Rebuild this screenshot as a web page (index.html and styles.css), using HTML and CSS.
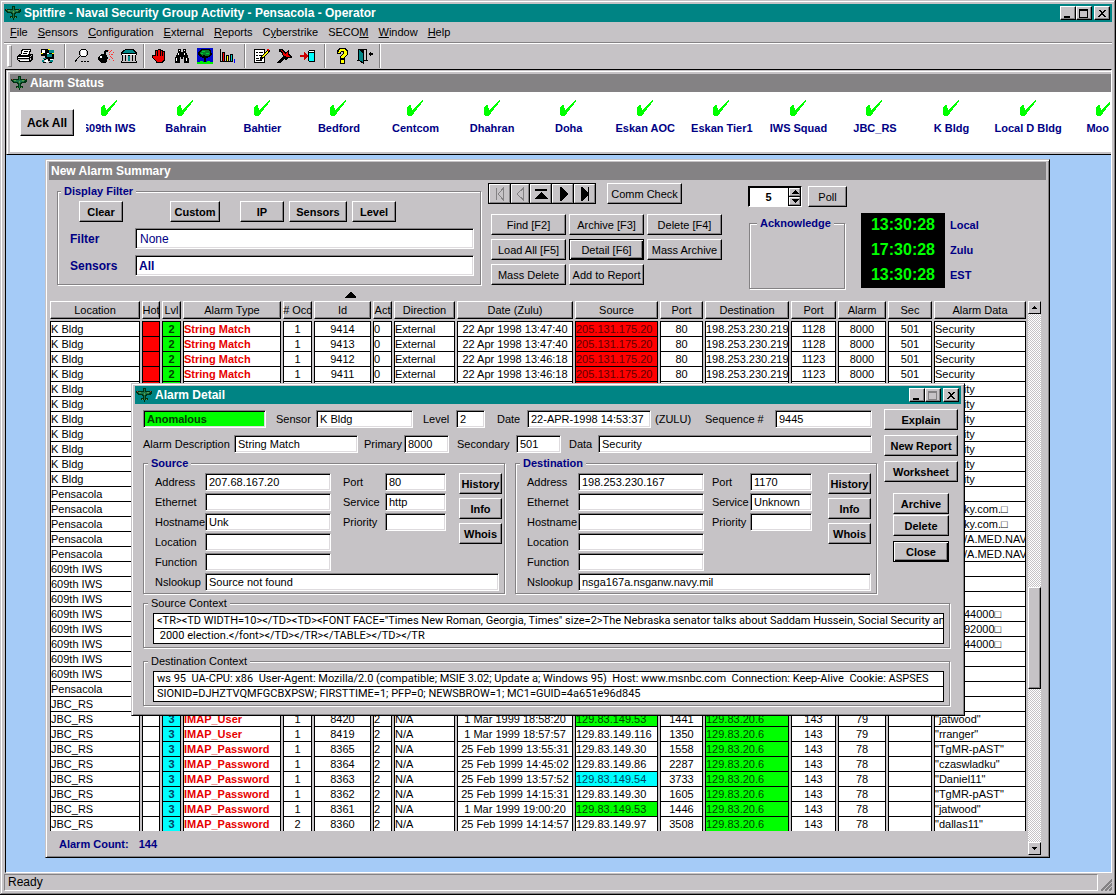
FILE: index.html
```html
<!DOCTYPE html>
<html lang="en">
<head>
<meta charset="utf-8">
<title>Spitfire - Naval Security Group Activity - Pensacola - Operator</title>
<link rel="stylesheet" href="styles.css">
</head>
<body>
<svg class="defs" aria-hidden="true">
  <symbol id="plane" viewBox="0 0 16 14"><path fill="#031" d="M7 0h3v3h6v2l-2 2h-2l-2 1v2h2v2H9v2H8v-2H5v-2h2V8L5 7H3L0 5V3h7z"/><path fill="#18734a" d="M8 1h1v3h5v1l-2 1h-2L9 8v4H8V8L7 6H4L2 5V4h6z"/><path fill="#5a9c4a" d="M3 4h2v1H3zM11 4h2v1h-2zM8 5h1v2H8zM6 11h1v1H6zM10 11h1v1h-1z"/><path fill="#a33" d="M1 3h1v1H1zM14 3h1v1h-1z"/></symbol>
  <symbol id="tick" viewBox="0 0 17 16"><path fill="#0f0" d="M0 7l3-2h1l1 5L15 0h1v1l-2 3-7 9-3 3H1L0 15z"/></symbol>
  <symbol id="min" viewBox="0 0 10 9"><path d="M1 7h6v2H1z"/></symbol>
  <symbol id="max" viewBox="0 0 10 9"><path fill="none" stroke="currentColor" d="M.5 .5h8v8h-8zM0 1.5h9"/></symbol>
  <symbol id="close" viewBox="0 0 10 9"><path d="M1 1h2l2 2 2-2h2L6 4l3 4H7L5 5.500 3 8H1l3-4z"/></symbol>
</svg>

<header class="titlebar">
  <svg class="plane"><use href="#plane"/></svg>
  <h1 class="title">Spitfire - Naval Security Group Activity - Pensacola - Operator</h1>
  <div class="winbtns">
    <button class="winbtn" aria-label="Minimize"><svg><use href="#min"/></svg></button>
    <button class="winbtn" aria-label="Maximize"><svg><use href="#max"/></svg></button>
    <button class="winbtn winbtn-close" aria-label="Close"><svg><use href="#close"/></svg></button>
  </div>
</header>

<nav class="menu">
  <button><u>F</u>ile</button>
  <button><u>S</u>ensors</button>
  <button><u>C</u>onfiguration</button>
  <button><u>E</u>xternal</button>
  <button><u>R</u>eports</button>
  <button>C<u>y</u>berstrike</button>
  <button>SECO<u>M</u></button>
  <button><u>W</u>indow</button>
  <button><u>H</u>elp</button>
</nav>

<div class="toolbar" role="toolbar">
  <span class="grip"></span>
  <div class="tools">
    <button aria-label="Print"><svg viewBox="0 0 16 16"><path d="M5 1h9v2l-1 3h2l1 1v4l-3 3H2l-2-2V8l2-2h2V3z"/><path fill="#fff" d="M6 2h7l-2 5H4zM1 9h11v1H1zM2 12h10v1H3z"/><path fill="#c6c3c6" d="M1 11h11v1H1zM13 8h1v1h-1zM14 7h1v1h-1zM13 10h1v2h-1z"/><path d="M7 3h4v1H7zM6 5h4v1H6z"/></svg></button>
    <button aria-label="Network"><svg viewBox="0 0 16 16"><path d="M1 1h8v3h5v7H5V8H1z"/><path fill="#fff" d="M2 2h3v3H2zM7 5h2v1H7zM5 12h3v2H5zM10 11h3v1h-3z"/><path fill="#088" d="M9 2h5v3H9zM7 6h5v3H7zM3 10h3v1H3zM2 12h2v2H2zM10 12h3v2h-3z"/><path fill="#ff0" d="M1 5h2v1H1zM12 5h2v1h-2zM8 1h2v1H8z"/><path d="M4 11h2v1H4zM3 14h3v1H3zM8 11h2v2H8zM9 14h3v1H9z"/></svg></button>
  </div>
  <div class="tools">
    <button aria-label="Search"><svg viewBox="0 0 16 16"><path fill="#fff" d="M6 2h5v6H6z"/><path d="M6 1h5v1H6zM11 2h1v1h-1zM12 3h1v4h-1zM11 7h1v1h-1zM6 8h5v1H6zM5 7h1v1H5zM4 3h1v4H4zM5 2h1v1H5zM4 8h1v1H4zM3 9h1v1H3zM2 10h1v1H2zM1 11h1v2H1zM0 12h1v2H0zM6 13h2v1H6zM9 13h2v1H9zM12 13h2v1h-2z"/></svg></button>
    <button aria-label="Bomb"><svg viewBox="0 0 16 16"><path d="M3 6h4l2 2 1 2-1 3-2 2H3l-2-2-1-3 1-2zM6 5l1-3h2l1 1v1H8L8 8z"/><path fill="#fff" d="M2 8h2v2H2z"/><path fill="#f33" d="M11 4h1v1h-1zM12 3h1v1h-1zM13 2h1v1h-1zM11 6h1v1h-1zM13 6h2v1h-2zM12 8h1v1h-1zM13 9h1v1h-1zM14 10h1v1h-1zM15 4h1v1h-1zM10 2h1v1h-1zM11 11h1v1h-1zM15 12h1v1h-1z"/></svg></button>
    <button aria-label="Headquarters"><svg viewBox="0 0 16 16"><path d="M5 1h6l3 1 2 3v2h-1v6h1v2H0v-2h1V7H0V5l2-3z"/><path fill="#088" d="M5 2h6l2 1 1 2H2l1-2z"/><path fill="#c6c3c6" d="M2 7h2v6H2zM5 7h2v6H5zM9 7h2v6H9zM12 7h2v6h-2zM1 13h14v1H1z"/><path fill="#fff" d="M1 6h14v1H1z"/><path fill="#088" d="M7 8h2v5H7z"/></svg></button>
  </div>
  <div class="tools">
    <button aria-label="Stop"><svg viewBox="0 0 16 16"><path d="M5 2h2V1h3v1h2v1h2v9l-2 2v1H5v-1L1 9V7h3V2z"/><path fill="#e00" d="M5 3h1v5H5zM7 2h2v6H7zM10 3h1v5h-1zM12 4h1v5h-1zM5 8h8v3l-2 3H6L2 9V8h3z"/></svg></button>
    <button aria-label="Find"><svg viewBox="0 0 16 16"><path d="M4 1h3v3h2V1h3v3l2 4 1 3v4h-5V9H9v2H7V9H6v6H1v-4l1-3 2-4z"/><path fill="#fff" d="M4 5h1v2H4zM2 10h1v3H2zM10 5h1v2h-1zM12 10h1v3h-1zM5 2h1v1H5zM10 2h1v1h-1z"/></svg></button>
    <button aria-label="Tree view"><svg viewBox="0 0 16 16"><path fill="#0008ce" d="M0 0h16v16H0z"/><path d="M4 1h8l2 2 1 3-2 3-4 1v4h2v1H5v-1h2v-4L3 9 1 6l1-3z"/><path fill="#087b29" d="M5 2h6l2 2v2l-2 2H9L7 7 5 8 3 6V4z"/><path fill="#0c3" d="M5 3h3v1H5zM9 5h3v1H9zM4 5h2v1H4z"/><path fill="#0e0" d="M0 14h3v-1h3v1h4v-1h3v1h3v2H0z"/></svg></button>
    <button aria-label="Chart"><svg viewBox="0 0 16 16"><path d="M0 1h1v12h12v1H0zM2 4h3v9H2zM6 7h3v6H6zM10 6h3v7h-3z"/><path fill="#f00" d="M3 5h1v8H3z"/><path fill="#ff0" d="M7 8h1v5H7z"/><path fill="#0cc" d="M11 7h1v6h-1z"/><path fill="#00f" d="M14 11h1v4h-1z"/></svg></button>
  </div>
  <div class="tools">
    <button aria-label="Edit report"><svg viewBox="0 0 16 16"><path d="M0 1h11v14H0z"/><path fill="#fff" d="M1 2h9v12H1z"/><path d="M2 4h2v1H2zM5 4h4v1H5zM2 7h2v1H2zM5 7h3v1H5zM2 10h3v1H2zM2 12h6v1H2zM6 10l6-7 3-2 1 2-7 8-3 1z"/><path fill="#ff0" d="M8 9l5-6 1 1-5 6z"/><path fill="#f00" d="M13 1h2v2h-1z"/></svg></button>
    <button aria-label="Tack"><svg viewBox="0 0 16 16"><path d="M2 1h3l3 3h2l1-2h1v4l3 3v1h-4l-2 2H8v-2l-5 5H0v-1l6-6-1-3-3-1z"/><path fill="#e00" d="M4 2l3 3 2 1 1-2h1v3l2 2h-3L7 8 6 5 4 3z"/></svg></button>
    <button aria-label="Send to database"><svg viewBox="0 0 16 16"><path d="M9 2h5l1 1v10l-1 1H9l-1-1V3z"/><path fill="#0ff" d="M9 5h5v8H9z"/><path fill="#fff" d="M9 3h5v1H9z"/><path fill="#c00" d="M0 7h4V4l5 4-5 4V9H0z"/></svg></button>
  </div>
  <div class="tools">
    <button aria-label="Help"><svg viewBox="0 0 16 16"><path d="M5 0h6l3 3v3l-3 3v2H6V8l3-2V4H7v2H3V3zM6 11h5v5H6z"/><path fill="#ff0" d="M5 3l1-2h4l3 2v3L10 9v1H7V8l3-2V4L9 3H7L6 5H4V4zM7 12h3v3H7z"/></svg></button>
    <button aria-label="Exit"><svg viewBox="0 0 16 16"><path d="M1 1h9v11h1v1H7v3L2 13H0v-1h1z"/><path fill="#c6c3c6" d="M7 2h2v10H7z"/><path fill="#088" d="M2 2l4 3v9l-4-2z"/><path d="M11 6l3-3v2h2v2h-2v2z"/></svg></button>
  </div>
</div>

<main class="desktop">
  <section class="status-panel">
    <div class="titlebar titlebar-off">
      <svg class="plane"><use href="#plane"/></svg>
      <h2 class="title">Alarm Status</h2>
    </div>
    <div class="status-body">
      <button class="btn btn-ack">Ack All</button>
      <div class="sensor-clip">
        <ul class="sensors">
          <li><svg><use href="#tick"/></svg>609th IWS</li>
          <li><svg><use href="#tick"/></svg>Bahrain</li>
          <li><svg><use href="#tick"/></svg>Bahtier</li>
          <li><svg><use href="#tick"/></svg>Bedford</li>
          <li><svg><use href="#tick"/></svg>Centcom</li>
          <li><svg><use href="#tick"/></svg>Dhahran</li>
          <li><svg><use href="#tick"/></svg>Doha</li>
          <li><svg><use href="#tick"/></svg>Eskan AOC</li>
          <li><svg><use href="#tick"/></svg>Eskan Tier1</li>
          <li><svg><use href="#tick"/></svg>IWS Squad</li>
          <li><svg><use href="#tick"/></svg>JBC_RS</li>
          <li><svg><use href="#tick"/></svg>K Bldg</li>
          <li><svg><use href="#tick"/></svg>Local D Bldg</li>
          <li class="sensor-cut"><svg><use href="#tick"/></svg><span>Moo</span></li>
        </ul>
      </div>
    </div>
  </section>

  <section class="window summary">
    <div class="titlebar titlebar-off"><h2 class="title title-plain">New Alarm Summary</h2></div>
    <div class="controls">
      <fieldset class="group filter">
        <legend class="strong">Display Filter</legend>
        <div class="filter-btns">
          <button class="btn btn-bold">Clear</button>
          <button class="btn btn-bold btn-custom">Custom</button>
          <button class="btn btn-bold btn-ip">IP</button>
          <button class="btn btn-bold btn-sensors">Sensors</button>
          <button class="btn btn-bold">Level</button>
        </div>
        <div class="filter-row"><label for="filter">Filter</label><input id="filter" class="field" value="None"></div>
        <div class="filter-row"><label for="sensors">Sensors</label><input id="sensors" class="field field-bold" value="All"></div>
      </fieldset>

      <div class="actions">
        <div class="nav-row">
          <div class="navigator">
            <button class="off" aria-label="First"><svg viewBox="0 0 14 14"><path d="M3.500 1v12M10.500 1v12L5 7z"/></svg></button>
            <button class="off nav-prev" aria-label="Previous"><svg viewBox="0 0 14 14"><path d="M10.500 1v12L4 7z"/></svg></button>
            <button aria-label="Top"><svg viewBox="0 0 14 14"><path d="M1 2h12v2H1zM7 5l7 7H0z"/></svg></button>
            <button aria-label="Next"><svg viewBox="0 0 14 14"><path d="M4 0h1l7 7-7 7H4z"/></svg></button>
            <button aria-label="Last"><svg viewBox="0 0 14 14"><path d="M3 0h1l6 6V0h1v14h-1V8l-6 6H3z"/></svg></button>
          </div>
          <button class="btn">Comm Check</button>
        </div>
        <div class="action-grid">
          <button class="btn">Find [F2]</button>
          <button class="btn">Archive [F3]</button>
          <button class="btn">Delete [F4]</button>
          <button class="btn">Load All [F5]</button>
          <button class="btn btn-default">Detail [F6]</button>
          <button class="btn">Mass Archive</button>
          <button class="btn">Mass Delete</button>
          <button class="btn">Add to Report</button>
        </div>
      </div>

      <div class="side">
        <div class="poll">
          <div class="spinner">
            <input aria-label="Poll interval" value="5">
            <div class="spin-btns">
              <button aria-label="Increase"><svg viewBox="0 0 8 4"><path d="M4 0l4 4H0z"/></svg></button>
              <button aria-label="Decrease"><svg viewBox="0 0 8 4"><path d="M0 0h8L4 4z"/></svg></button>
            </div>
          </div>
          <button class="btn btn-poll">Poll</button>
        </div>
        <div class="clock-row">
          <fieldset class="group ack"><legend class="strong">Acknowledge</legend></fieldset>
          <div class="clocks"><span>13:30:28</span><span>17:30:28</span><span>13:30:28</span></div>
          <div class="zones"><span>Local</span><span>Zulu</span><span>EST</span></div>
        </div>
      </div>
    </div>
    <div class="sort-row"><svg class="sort" viewBox="0 0 11 6"><path d="M5 0h1l5 5v1H0V5z"/></svg></div>

    <div class="grid-area">
      <div class="grid-main">
        <table class="alarms">
          <colgroup><col class="w90"><col class="w18"><col class="w19"><col class="w98"><col class="w29"><col class="w57"><col class="w19"><col class="w61"><col class="w116"><col class="w83"><col class="w43"><col class="w84"><col class="w45"><col class="w48"><col class="w44"><col></colgroup>
          <thead><tr><th><div>Location</div><th><div>Hot</div><th><div>Lvl</div><th><div>Alarm Type</div><th><div># Occ</div><th><div>Id</div><th><div>Act</div><th><div>Direction</div><th><div>Date (Zulu)</div><th><div>Source</div><th><div>Port</div><th><div>Destination</div><th><div>Port</div><th><div>Alarm</div><th><div>Sec</div><th><div>Alarm Data</div></tr></thead>
          <tbody>
            <tr><td>K Bldg<td class="red"><td class="green">2<td>String Match<td>1<td>9414<td>0<td>External<td>22 Apr 1998 13:47:40<td class="red">205.131.175.20<td>80<td>198.253.230.219<td>1128<td>8000<td>501<td>Security</tr>
            <tr><td>K Bldg<td class="red"><td class="green">2<td>String Match<td>1<td>9413<td>0<td>External<td>22 Apr 1998 13:47:40<td class="red">205.131.175.20<td>80<td>198.253.230.219<td>1128<td>8000<td>501<td>Security</tr>
            <tr><td>K Bldg<td class="red"><td class="green">2<td>String Match<td>1<td>9412<td>0<td>External<td>22 Apr 1998 13:46:18<td class="red">205.131.175.20<td>80<td>198.253.230.219<td>1123<td>8000<td>501<td>Security</tr>
            <tr><td>K Bldg<td class="red"><td class="green">2<td>String Match<td>1<td>9411<td>0<td>External<td>22 Apr 1998 13:46:18<td class="red">205.131.175.20<td>80<td>198.253.230.219<td>1123<td>8000<td>501<td>Security</tr>
            <tr><td>K Bldg<td class="red"><td class="green"><td><td><td><td><td><td><td class="red"><td><td><td><td><td><td>Security</tr>
            <tr class="covered"><td>K Bldg<td colspan="14"><td>Security</tr>
            <tr class="covered"><td>K Bldg<td colspan="14"><td>Security</tr>
            <tr class="covered"><td>K Bldg<td colspan="14"><td>Security</tr>
            <tr class="covered"><td>K Bldg<td colspan="14"><td>Security</tr>
            <tr class="covered"><td>K Bldg<td colspan="14"><td>Security</tr>
            <tr class="covered"><td>K Bldg<td colspan="14"><td>Security</tr>
            <tr class="covered"><td>Pensacola<td colspan="14"><td></tr>
            <tr class="covered"><td>Pensacola<td colspan="14"><td class="tail">ky.com.&#9633;</tr>
            <tr class="covered"><td>Pensacola<td colspan="14"><td class="tail">ky.com.&#9633;</tr>
            <tr class="covered"><td>Pensacola<td colspan="14"><td class="tail">/A.MED.NAV</tr>
            <tr class="covered"><td>Pensacola<td colspan="14"><td class="tail">/A.MED.NAV</tr>
            <tr class="covered"><td>609th IWS<td colspan="14"><td></tr>
            <tr class="covered"><td>609th IWS<td colspan="14"><td></tr>
            <tr class="covered"><td>609th IWS<td colspan="14"><td></tr>
            <tr class="covered"><td>609th IWS<td colspan="14"><td class="tail">44000&#9633;</tr>
            <tr class="covered"><td>609th IWS<td colspan="14"><td class="tail">92000&#9633;</tr>
            <tr class="covered"><td>609th IWS<td colspan="14"><td class="tail">44000&#9633;</tr>
            <tr class="covered"><td>609th IWS<td colspan="14"><td></tr>
            <tr class="covered"><td>609th IWS<td colspan="14"><td></tr>
            <tr class="covered"><td>Pensacola<td colspan="14"><td></tr>
            <tr class="covered"><td>JBC_RS<td colspan="14"><td></tr>
            <tr><td>JBC_RS<td><td class="cyan">3<td>IMAP_User<td>1<td>8420<td>2<td>N/A<td>1 Mar 1999 18:58:20<td class="green">129.83.149.53<td>1441<td class="green">129.83.20.6<td>143<td>79<td><td>"jatwood"</tr>
            <tr><td>JBC_RS<td><td class="cyan">3<td>IMAP_User<td>1<td>8419<td>2<td>N/A<td>1 Mar 1999 18:57:57<td>129.83.149.116<td>1350<td class="green">129.83.20.6<td>143<td>79<td><td>"rranger"</tr>
            <tr><td>JBC_RS<td><td class="cyan">3<td>IMAP_Password<td>1<td>8365<td>2<td>N/A<td>25 Feb 1999 13:55:31<td>129.83.149.30<td>1558<td class="green">129.83.20.6<td>143<td>78<td><td>"TgMR-pAST"</tr>
            <tr><td>JBC_RS<td><td class="cyan">3<td>IMAP_Password<td>1<td>8364<td>2<td>N/A<td>25 Feb 1999 14:45:02<td>129.83.149.86<td>2287<td class="green">129.83.20.6<td>143<td>78<td><td>"czaswladku"</tr>
            <tr><td>JBC_RS<td><td class="cyan">3<td>IMAP_Password<td>1<td>8363<td>2<td>N/A<td>25 Feb 1999 13:57:52<td class="cyan">129.83.149.54<td>3733<td class="green">129.83.20.6<td>143<td>78<td><td>"Daniel11"</tr>
            <tr><td>JBC_RS<td><td class="cyan">3<td>IMAP_Password<td>1<td>8362<td>2<td>N/A<td>25 Feb 1999 14:15:31<td>129.83.149.30<td>1605<td class="green">129.83.20.6<td>143<td>78<td><td>"TgMR-pAST"</tr>
            <tr><td>JBC_RS<td><td class="cyan">3<td>IMAP_Password<td>1<td>8361<td>2<td>N/A<td>1 Mar 1999 19:00:20<td class="green">129.83.149.53<td>1446<td class="green">129.83.20.6<td>143<td>78<td><td>"jatwood"</tr>
            <tr><td>JBC_RS<td><td class="cyan">3<td>IMAP_Password<td>2<td>8360<td>2<td>N/A<td>25 Feb 1999 14:14:57<td>129.83.149.97<td>3508<td class="green">129.83.20.6<td>143<td>78<td><td>"dallas11"</tr>
          </tbody>
        </table>
        <p class="count"><span>Alarm Count:</span><span>144</span></p>
      </div>
      <div class="scrollbar">
        <button aria-label="Scroll up"><svg viewBox="0 0 5 3"><path d="M2 0h1l2 3H0z"/></svg></button>
        <div class="track"><div class="thumb"></div></div>
        <button aria-label="Scroll down"><svg viewBox="0 0 5 3"><path d="M0 0h5L3 3H2z"/></svg></button>
      </div>
    </div>
  </section>

  <section class="window detail">
    <div class="titlebar">
      <svg class="plane"><use href="#plane"/></svg>
      <h2 class="title">Alarm Detail</h2>
      <div class="winbtns">
        <button class="winbtn" aria-label="Minimize"><svg><use href="#min"/></svg></button>
        <button class="winbtn winbtn-off" aria-label="Maximize" disabled><svg><use href="#max"/></svg></button>
        <button class="winbtn winbtn-close" aria-label="Close"><svg><use href="#close"/></svg></button>
      </div>
    </div>
    <div class="detail-body">
      <div class="detail-main">
        <div class="detail-form">
          <div class="line">
            <input class="field field-alert" aria-label="Classification" value="Anomalous">
            <label class="l-sensor" for="sensor">Sensor</label><input class="field f97" id="sensor" value="K Bldg">
            <label class="l-level" for="level">Level</label><input class="field f29" id="level" value="2">
            <label class="l-date" for="date">Date</label><input class="field f124" id="date" value="22-APR-1998 14:53:37">
            <span class="zulu">(ZULU)</span>
            <label class="l-seq" for="seq">Sequence #</label><input class="field grow" id="seq" value="9445">
          </div>
          <div class="line">
            <label class="l-desc" for="desc">Alarm Description</label><input class="field f124" id="desc" value="String Match">
            <label class="l-prim" for="prim">Primary</label><input class="field f45" id="prim" value="8000">
            <label class="l-sec" for="sec">Secondary</label><input class="field f45" id="sec" value="501">
            <label class="l-data" for="data">Data</label><input class="field grow" id="data" value="Security">
          </div>
          <div class="hosts">
            <fieldset class="group host host-src">
              <legend class="strong">Source</legend>
              <label for="s-addr">Address</label><input class="field" id="s-addr" value="207.68.167.20">
              <label class="second" for="s-port">Port</label><input class="field" id="s-port" value="80">
              <div class="host-btns"><button class="btn btn-bold">History</button><button class="btn btn-bold">Info</button><button class="btn btn-bold">Whois</button></div>
              <label for="s-eth">Ethernet</label><input class="field" id="s-eth">
              <label class="second" for="s-svc">Service</label><input class="field" id="s-svc" value="http">
              <label for="s-host">Hostname</label><input class="field" id="s-host" value="Unk">
              <label class="second" for="s-pri">Priority</label><input class="field" id="s-pri">
              <label class="first" for="s-loc">Location</label><input class="field" id="s-loc">
              <label class="first" for="s-fun">Function</label><input class="field" id="s-fun">
              <label class="first" for="s-ns">Nslookup</label><input class="field wide" id="s-ns" value="Source not found">
            </fieldset>
            <fieldset class="group host host-dst">
              <legend class="strong">Destination</legend>
              <label for="d-addr">Address</label><input class="field" id="d-addr" value="198.253.230.167">
              <label class="second" for="d-port">Port</label><input class="field" id="d-port" value="1170">
              <div class="host-btns"><button class="btn btn-bold">History</button><button class="btn btn-bold">Info</button><button class="btn btn-bold">Whois</button></div>
              <label for="d-eth">Ethernet</label><input class="field" id="d-eth">
              <label class="second" for="d-svc">Service</label><input class="field" id="d-svc" value="Unknown">
              <label for="d-host">Hostname</label><input class="field" id="d-host">
              <label class="second" for="d-pri">Priority</label><input class="field" id="d-pri">
              <label class="first" for="d-loc">Location</label><input class="field" id="d-loc">
              <label class="first" for="d-fun">Function</label><input class="field" id="d-fun">
              <label class="first" for="d-ns">Nslookup</label><input class="field wide" id="d-ns" value="nsga167a.nsganw.navy.mil">
            </fieldset>
          </div>
        </div>
        <div class="detail-btns">
          <button class="btn btn-bold">Explain</button>
          <button class="btn btn-bold">New Report</button>
          <button class="btn btn-bold">Worksheet</button>
          <div class="detail-btns-small">
            <button class="btn btn-bold">Archive</button>
            <button class="btn btn-bold">Delete</button>
            <button class="btn btn-bold btn-default">Close</button>
          </div>
        </div>
      </div>
      <fieldset class="group context">
        <legend>Source Context</legend>
        <div class="lines">
          <p>&lt;TR&gt;&lt;TD WIDTH=10&gt;&lt;/TD&gt;&lt;TD&gt;&lt;FONT FACE="Times New Roman, Georgia, Times" size=2&gt;The Nebraska senator talks about Saddam Hussein, Social Security and</p>
          <p> 2000 election.&lt;/font&gt;&lt;/TD&gt;&lt;/TR&gt;&lt;/TABLE&gt;&lt;/TD&gt;&lt;/TR</p>
        </div>
      </fieldset>
      <fieldset class="group context">
        <legend>Destination Context</legend>
        <div class="lines">
          <p>ws 95  UA-CPU: x86  User-Agent: Mozilla/2.0 (compatible; MSIE 3.02; Update a; Windows 95)  Host: www.msnbc.com  Connection: Keep-Alive  Cookie: ASPSES</p>
          <p>SIONID=DJHZTVQMFGCBXPSW; FIRSTTIME=1; PFP=0; NEWSBROW=1; MC1=GUID=4a651e96d845</p>
        </div>
      </fieldset>
    </div>
  </section>
</main>

<footer class="statusbar">
  <span class="ready">Ready</span>
  <svg class="resize" viewBox="0 0 12 12"><path stroke="#848284" stroke-width="2" d="M1 12L12 1M5 12l7-7M9 12l3-3"/></svg>
</footer>
</body>
</html>
```

FILE: styles.css
```css
:root {
  --face: #c6c3c6;
  --shade: #848284;
  --navy: #000084;
  --teal: #008484;
}
* { box-sizing: border-box; }
body {
  margin: 0;
  height: 100vh;
  min-height: 895px;
  padding: 4px;
  display: flex;
  flex-direction: column;
  overflow: hidden;
  background: var(--face);
  color: #000;
  font: 11px/14px "Liberation Sans", Arial, sans-serif;
  box-shadow: inset -1px -1px #000, inset 1px 1px var(--face), inset -2px -2px var(--shade), inset 2px 2px #fff;
}
button, input { font: inherit; color: inherit; margin: 0; padding: 0; border-radius: 0; }
h1, h2, p, ul { margin: 0; padding: 0; font-size: inherit; font-weight: inherit; }
svg { display: block; flex: none; shape-rendering: crispEdges; }
.defs { position: absolute; width: 0; height: 0; }

/* Title bars */
.titlebar { display: flex; align-items: center; flex: none; height: 18px; padding: 0 2px 0 1px; background: var(--teal); color: #fff; }
.titlebar-off { background: var(--shade); }
.plane { width: 16px; height: 14px; }
.title { padding-left: 3px; font-size: 12px; font-weight: bold; white-space: nowrap; }
.title-plain { padding-left: 1px; }
.winbtns { display: flex; margin-left: auto; }
.winbtn {
  width: 16px; height: 14px; display: grid; place-items: center; background: var(--face); color: #000;
  border: 1px solid; border-color: #fff #000 #000 #fff; box-shadow: inset -1px -1px var(--shade);
}
.winbtn svg { width: 10px; height: 9px; }
.winbtn-off { color: var(--shade); }
.winbtn-close { margin-left: 2px; }

/* Menu and toolbar */
.menu { display: flex; flex: none; gap: 10px; height: 20px; padding-left: 6px; align-items: center; }
.menu button { border: 0; background: none; }
.toolbar { display: flex; flex: none; height: 27px; align-items: center; border-top: 1px solid var(--shade); box-shadow: inset 0 1px #fff; }
.grip { width: 5px; height: 22px; margin-left: 3px; border: 1px solid; border-color: #fff var(--shade) var(--shade) #fff; border-left-width: 2px; }
.tools { display: flex; gap: 7px; padding: 4px 8px; margin-right: 1px; border-right: 1px solid var(--shade); box-shadow: 1px 0 #fff; }
.tools:nth-of-type(1) { padding-left: 5px; }
.tools:nth-of-type(2) { padding: 4px 6px 4px 9px; }
.tools:nth-of-type(3) { padding-left: 6px; }
.tools:nth-of-type(5) { padding: 4px 6px 4px 8px; }
.tools button { width: 16px; height: 16px; border: 0; background: none; }
.tools svg { width: 16px; height: 16px; }

/* Desktop */
.desktop { flex: 1; position: relative; margin-left: 1px; min-height: 0; background: #a5cbf7; border: 1px solid; border-color: #000 #fff #fff #000; overflow: hidden; }
.status-panel { padding: 3px 0 2px 3px; border: 1px solid var(--face); border-right: 0; border-bottom-color: #000; background: var(--face); box-shadow: inset 1px 1px #fff; }
.status-body { display: flex; height: 60px; background: #fff; }
.sensor-clip { flex: 1; min-width: 0; overflow: hidden; margin-right: 1px; }
.sensors { display: grid; grid-template-columns: repeat(14, 1fr); margin: 8px -33px 0 -15px; list-style: none; color: var(--navy); font-weight: bold; }
.sensors li { display: flex; flex-direction: column; align-items: center; gap: 5px; white-space: nowrap; min-width: 0; }
.sensors svg { width: 17px; height: 16px; }
.sensor-cut span { align-self: flex-start; padding-left: 20px; }

/* Shared controls */
.btn {
  height: 21px; background: var(--face); white-space: nowrap; text-align: center;
  border: 1px solid; border-color: #fff #000 #000 #fff; box-shadow: inset -1px -1px var(--shade);
}
.btn-bold { font-weight: bold; }
.btn-ack { flex: none; width: 54px; height: 27px; margin: 17px 12px 0 10px; font-size: 12px; font-weight: bold; }
.btn-default { border-color: #000; box-shadow: inset 1px 1px #fff, inset -1px -1px #000, inset -2px -2px var(--shade); }
.field {
  height: 18px; min-width: 0; padding: 0 3px; background: #fff;
  border: 1px solid; border-color: var(--shade) #fff #fff var(--shade); box-shadow: inset 1px 1px #000, inset -1px -1px #dedbde;
}
.group { margin: 0; min-width: 0; padding: 0; border: 1px solid var(--shade); box-shadow: 1px 1px #fff, inset 1px 1px #fff; }
.group legend { height: 13px; line-height: 13px; padding: 0 3px; background: var(--face); }
.strong { color: var(--navy); font-weight: bold; }
.window { position: absolute; padding: 2px 3px; background: var(--face); border: 1px solid; border-color: var(--face) #000 #000 var(--face); box-shadow: inset 1px 1px #fff, inset -1px -1px var(--shade); }

/* New Alarm Summary */
.summary { left: 39px; right: 61px; top: 89px; }
.controls { display: flex; align-items: flex-start; height: 108px; }
.filter { width: 424px; margin: 5px 7px 0 8px; padding: 3px 6px 8px 12px; display: flex; flex-direction: column; gap: 6px; }
.filter legend { margin-left: -9px; }
.filter-btns { display: flex; padding-left: 9px; gap: 5px; }
.filter-btns .btn { width: 44px; }
.filter-btns .btn-custom { width: 50px; margin-left: 42px; }
.filter-btns .btn-ip { margin-left: 15px; }
.filter-btns .btn-sensors { width: 58px; }
.filter-row { display: flex; align-items: center; color: var(--navy); font-size: 12px; }
.filter-row label { width: 65px; font-weight: bold; }
.filter-row .field { flex: 1; height: 21px; padding-left: 4px; }
.filter-row .field-bold { font-weight: bold; padding-left: 3px; }
.actions { width: 235px; margin: 3px 25px 0 0; }
.nav-row { display: flex; gap: 11px; }
.nav-row > .btn { width: 75px; }
.navigator { display: flex; border: 1px solid #000; background: #000; gap: 1px; }
.navigator button { width: 21px; height: 19px; display: grid; place-items: center; background: var(--face); border: 1px solid; border-color: #fff var(--shade) var(--shade) #fff; }
.navigator .nav-prev { width: 18px; }
.navigator svg { width: 14px; height: 14px; }
.off svg path { fill: none; stroke: var(--shade); }
.action-grid { display: grid; grid-template-columns: repeat(3, 75px); gap: 4px 3px; margin: 10px 0 0 3px; }
.side { margin-top: 6px; }
.poll { display: flex; gap: 6px; }
.spinner { display: flex; width: 54px; height: 21px; background: #fff; border: 1px solid; border-color: #000 #fff #fff #000; box-shadow: inset 1px 1px #000; }
.spinner input { flex: 1; min-width: 0; border: 0; background: none; text-align: center; font-weight: bold; }
.spin-btns { display: grid; gap: 1px; width: 13px; background: #000; border: 1px solid #000; }
.spin-btns button { display: grid; place-items: center; background: var(--face); border: 1px solid; border-color: #fff var(--shade) var(--shade) #fff; }
.spin-btns svg { width: 8px; height: 4px; }
.btn-poll { width: 39px; }
.clock-row { display: flex; align-items: flex-start; margin-top: 6px; }
.ack { width: 96px; height: 72px; margin: 4px 16px 0 1px; }
.ack legend { margin-left: 7px; }
.clocks { width: 84px; background: #000; color: #0f0; font-size: 16px; font-weight: bold; text-align: center; }
.zones { padding-left: 5px; color: var(--navy); font-weight: bold; }
.clocks span, .zones span { display: block; height: 25px; line-height: 24px; }
.sort-row { display: flex; height: 13px; align-items: center; padding-left: 296px; }
.sort { width: 11px; height: 6px; }

.grid-area { display: flex; margin-left: -1px; }
.grid-main { flex: 1; min-width: 0; }
.alarms { width: 100%; table-layout: fixed; border-collapse: separate; border-spacing: 2px 0; }
.w18 { width: 18px; } .w19 { width: 19px; } .w29 { width: 29px; } .w43 { width: 43px; }
.w44 { width: 44px; } .w45 { width: 45px; } .w48 { width: 48px; } .w57 { width: 57px; }
.w61 { width: 61px; } .w83 { width: 83px; } .w84 { width: 84px; } .w90 { width: 90px; }
.w98 { width: 98px; } .w116 { width: 116px; }
.alarms th { padding: 0 0 2px; font-weight: normal; }
.alarms th div { height: 18px; line-height: 17px; white-space: nowrap; border: 1px solid; border-color: #fff #000 #000 #fff; box-shadow: inset -1px -1px var(--shade); display: flex; justify-content: center; }
.alarms td { height: 15px; padding: 0; line-height: 14px; white-space: nowrap; overflow: hidden; background: #fff; border: 1px solid #000; border-bottom: 0; text-align: center; }
.alarms td:nth-child(1), .alarms td:nth-child(4), .alarms td:nth-child(7), .alarms td:nth-child(8),
.alarms td:nth-child(10), .alarms td:nth-child(12), .alarms td:nth-child(16), .alarms .covered td { text-align: left; }
.alarms td:nth-child(3), .alarms td:nth-child(4) { font-weight: bold; }
.alarms td:nth-child(4) { color: #e70000; }
.alarms .covered td { font-weight: normal; }
.alarms .covered .tail { padding-left: 29px; }
.alarms .red { background: #f00; color: #630000; }
.alarms .green { background: #0f0; color: #004200; }
.alarms .cyan { background: #0ff; color: #004263; }
.count { display: flex; gap: 10px; height: 24px; padding: 6px 0 0 11px; color: var(--navy); font-weight: bold; }
.scrollbar { display: flex; flex-direction: column; width: 13px; margin-right: 5px; }
.scrollbar button { height: 13px; display: grid; place-items: center; background: var(--face); border: 1px solid; border-color: #fff #000 #000 #fff; }
.scrollbar svg { width: 5px; height: 3px; }
.track { flex: 1; padding-top: 273px; background: repeating-conic-gradient(#fff 0 25%, var(--face) 0 50%) 0 0 / 2px 2px; }
.thumb { height: 102px; background: var(--face); border: 1px solid; border-color: #fff #000 #000 #fff; box-shadow: inset -1px -1px var(--shade); }

/* Alarm Detail */
.detail { left: 125px; top: 313px; width: 834px; }
.detail-body { padding: 5px 3px 7px 8px; display: flex; flex-direction: column; gap: 3px; }
.detail-main { display: flex; gap: 7px; }
.detail-form { flex: 1; min-width: 0; padding-top: 1px; }
.line { display: flex; align-items: center; margin-bottom: 7px; padding-right: 5px; white-space: nowrap; }
.line + .line { margin-bottom: 4px; }
.field-alert { width: 123px; background: #0f0; font-weight: bold; color: #004200; }
.f29 { width: 29px; } .f45 { width: 45px; } .f97 { width: 97px; } .f124 { width: 124px; }
.grow { flex: 1; }
.l-sensor { width: 50px; padding-left: 10px; }
.l-level { width: 43px; padding-left: 10px; }
.l-date { width: 42px; padding-left: 12px; }
.zulu { width: 54px; padding-left: 4px; }
.l-seq { width: 70px; }
.l-desc { width: 91px; }
.l-prim { width: 46px; padding-left: 6px; }
.l-sec { width: 67px; padding-left: 8px; }
.l-data { width: 37px; padding-left: 8px; }
.hosts { display: grid; grid-template-columns: 1fr 1fr; gap: 10px; }
.host { display: grid; row-gap: 2px; padding: 3px 0 2px 11px; align-items: center; }
.host legend { margin-left: -7px; }
.host-src { grid-template-columns: 50px 126px 54px 61px 56px; }
.host-dst { grid-template-columns: 51px 126px 46px 62px 59px; }
.host label { white-space: nowrap; }
.host .first { grid-column: 1; }
.host-src .second { padding-left: 12px; }
.host-dst .second { padding-left: 8px; }
.host .wide { grid-column: 2 / -1; margin-right: 3px; }
.host-dst .wide { margin-right: 0; }
.host-btns { grid-column: 5; grid-row: 1 / span 5; align-self: start; display: flex; flex-direction: column; gap: 4px; align-items: flex-end; }
.host-btns .btn { width: 43px; }
.detail-btns { display: flex; flex-direction: column; gap: 5px; width: 74px; }
.detail-btns-small { display: flex; flex-direction: column; gap: 1px; margin: 6px 9px 0; }
.detail-btns-small .btn-default { margin-top: 4px; }
.context { margin-right: 8px; padding: 3px 5px 3px 9px; }
.context legend { margin-left: -5px; }
.context + .context { margin-top: 4px; }
.lines { border: 1px solid #000; background: #fff; font-family: Roboto, "Liberation Sans", sans-serif; }
.lines p { height: 14px; padding: 0 3px; overflow: hidden; white-space: pre; }
.lines p + p { height: 15px; border-top: 1px solid #000; }

/* Status bar */
.statusbar { display: flex; flex: none; height: 18px; padding-top: 1px; }
.ready { flex: 1; padding-left: 3px; line-height: 15px; font-size: 12px; border: 1px solid; border-color: var(--shade) #fff #fff var(--shade); }
.resize { width: 12px; height: 12px; margin: 5px 0 0 2px; }
```
